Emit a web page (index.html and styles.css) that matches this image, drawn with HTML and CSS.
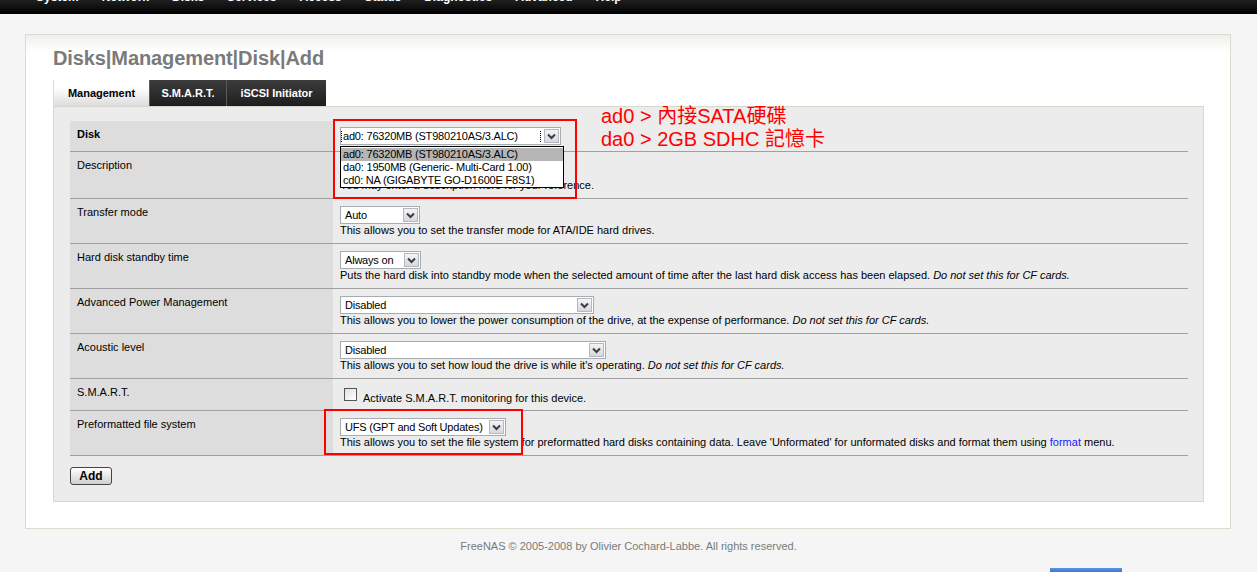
FILE: index.html
```html
<!DOCTYPE html>
<html lang="en">
<head>
  <meta charset="UTF-8" />
  <title>Disks | Management | Disk | Add</title>
  <link rel="stylesheet" href="styles.css">
</head>
<body>

  <!-- Menu superior (solo se ve la parte baja del texto) -->
  <div class="topbar">
    <ul class="menu">
      <li>System</li>
      <li>Network</li>
      <li>Disks</li>
      <li>Services</li>
      <li>Access</li>
      <li>Status</li>
      <li>Diagnostics</li>
      <li>Advanced</li>
      <li>Help</li>
    </ul>
  </div>

  <div class="page">
    <h1 class="title">Disks|Management|Disk|Add</h1>

    <ul class="tabs">
      <li class="active">Management</li>
      <li>S.M.A.R.T.</li>
      <li>iSCSI Initiator</li>
    </ul>

    <div class="tab-content">
      <table class="form">
        <tr>
          <td class="label bold">Disk</td>
          <td class="value first">
            <div class="select-wrap">
              <div class="select w-disk">
                <span class="text"><span class="focus">ad0: 76320MB (ST980210AS/3.ALC)</span></span>
                <span class="arrow"><svg width="9" height="7" viewBox="0 0 9 7"><path d="M1 1.5 L4.5 5 L8 1.5" fill="none" stroke="#3c3c3c" stroke-width="2"/></svg></span>
              </div>
              <!-- lista desplegada -->
              <ul class="dropdown">
                <li class="selected">ad0: 76320MB (ST980210AS/3.ALC)</li>
                <li>da0: 1950MB (Generic- Multi-Card 1.00)</li>
                <li>cd0: NA (GIGABYTE GO-D1600E F8S1)</li>
              </ul>
            </div>
          </td>
        </tr>
        <tr>
          <td class="label">Description</td>
          <td class="value">
            <div class="input"></div>
            <div class="hint">You may enter a description here for your reference.</div>
          </td>
        </tr>
        <tr>
          <td class="label">Transfer mode</td>
          <td class="value">
            <div class="select w-transfer">
              <span class="text">Auto</span>
              <span class="arrow"><svg width="9" height="7" viewBox="0 0 9 7"><path d="M1 1.5 L4.5 5 L8 1.5" fill="none" stroke="#3c3c3c" stroke-width="2"/></svg></span>
            </div>
            <div class="hint">This allows you to set the transfer mode for ATA/IDE hard drives.</div>
          </td>
        </tr>
        <tr>
          <td class="label">Hard disk standby time</td>
          <td class="value">
            <div class="select w-standby">
              <span class="text">Always on</span>
              <span class="arrow"><svg width="9" height="7" viewBox="0 0 9 7"><path d="M1 1.5 L4.5 5 L8 1.5" fill="none" stroke="#3c3c3c" stroke-width="2"/></svg></span>
            </div>
            <div class="hint">Puts the hard disk into standby mode when the selected amount of time after the last hard disk access has been elapsed. <em>Do not set this for CF cards.</em></div>
          </td>
        </tr>
        <tr>
          <td class="label">Advanced Power Management</td>
          <td class="value">
            <div class="select w-apm">
              <span class="text">Disabled</span>
              <span class="arrow"><svg width="9" height="7" viewBox="0 0 9 7"><path d="M1 1.5 L4.5 5 L8 1.5" fill="none" stroke="#3c3c3c" stroke-width="2"/></svg></span>
            </div>
            <div class="hint">This allows you to lower the power consumption of the drive, at the expense of performance. <em>Do not set this for CF cards.</em></div>
          </td>
        </tr>
        <tr>
          <td class="label">Acoustic level</td>
          <td class="value">
            <div class="select w-acoustic">
              <span class="text">Disabled</span>
              <span class="arrow"><svg width="9" height="7" viewBox="0 0 9 7"><path d="M1 1.5 L4.5 5 L8 1.5" fill="none" stroke="#3c3c3c" stroke-width="2"/></svg></span>
            </div>
            <div class="hint">This allows you to set how loud the drive is while it's operating. <em>Do not set this for CF cards.</em></div>
          </td>
        </tr>
        <tr>
          <td class="label">S.M.A.R.T.</td>
          <td class="value smart">
            <div class="check-row">
              <span class="checkbox"></span>
              <span class="check-text">Activate S.M.A.R.T. monitoring for this device.</span>
            </div>
          </td>
        </tr>
        <tr>
          <td class="label">Preformatted file system</td>
          <td class="value">
            <div class="select w-fs">
              <span class="text">UFS (GPT and Soft Updates)</span>
              <span class="arrow"><svg width="9" height="7" viewBox="0 0 9 7"><path d="M1 1.5 L4.5 5 L8 1.5" fill="none" stroke="#3c3c3c" stroke-width="2"/></svg></span>
            </div>
            <div class="hint">This allows you to set the file system for preformatted hard disks containing data. Leave 'Unformated' for unformated disks and format them using <a href="#">format</a> menu.</div>
          </td>
        </tr>
      </table>

      <button class="btn">Add</button>
    </div>
  </div>

  <div class="footer">FreeNAS © 2005-2008 by Olivier Cochard-Labbe. All rights reserved.</div>

  <!-- Anotaciones rojas sobre la captura -->
  <div class="mark mark-disk"></div>
  <div class="mark mark-fs"></div>
  <div class="note">
    <div>ad0 &gt; 內接SATA硬碟</div>
    <div>da0 &gt; 2GB SDHC 記憶卡</div>
  </div>

  <div class="corner-tab"></div>

</body>
</html>
```

FILE: styles.css
```css
html, body {
  height: 100%;
  overflow: hidden;
}

body {
  margin: 0;
  padding: 0;
  background: #f5f5f5;
  font-family: "Liberation Sans", Arial, sans-serif;
  font-size: 11px;
  line-height: 13px;
  color: #000;
  position: relative;
}

/* Barra superior */
.topbar {
  height: 14px;
  overflow: hidden;
  background: linear-gradient(#202020, #000000);
}

.menu {
  list-style: none;
  margin: -11px 0 0 36px;
  padding: 0;
  display: flex;
  gap: 23px;
  font-size: 12px;
  line-height: 16px;
  font-weight: bold;
  color: #fff;
}

/* Panel blanco principal */
.page {
  margin: 20px 26px 0 25px;
  padding: 12px 26px 26px 27px;
  background: #fff linear-gradient(#efefeb, #ffffff 16px) no-repeat;
  border: 1px solid #dcdcd0;
}

.title {
  margin: 0 0 10px 0;
  font-size: 20px;
  line-height: 23px;
  font-weight: bold;
  color: #7a7a7a;
  letter-spacing: -0.1px;
}

/* Pestañas */
.tabs {
  list-style: none;
  margin: 0;
  padding: 0;
  display: flex;
  height: 26px;
}

.tabs li {
  line-height: 26px;
  font-weight: bold;
  font-size: 11px;
  color: #fff;
  background: linear-gradient(#3c3c3c, #1e1e1e);
  border-left: 1px solid #5a5a5a;
  text-align: center;
}

.tabs li:nth-child(2) {
  width: 76px;
}

.tabs li:nth-child(3) {
  width: 99px;
}

.tabs li.active {
  width: 95px;
  color: #000;
  border-left: 1px solid #dcdcd0;
  background: linear-gradient(#ffffff 30%, #dcdcdc);
}

.tab-content {
  background: #ececec;
  border: 1px solid #d8d8cc;
  padding: 14px 15px 16px 16px;
}

/* Tabla del formulario */
.form {
  width: 100%;
  border-collapse: collapse;
}

.form td {
  vertical-align: top;
  border-bottom: 1px solid #a0a0a0;
}

.form .label {
  width: 249px;
  padding: 7px 7px;
  background: #dddddd;
}

.form .label.bold {
  font-weight: bold;
}

.form .value {
  padding: 7px 7px 6px 7px;
}

.form .value.first {
  padding: 6px 7px;
}

.form .value.smart {
  padding: 9px 7px 5px 11px;
}

/* Selects estilo XP */
.select-wrap {
  position: relative;
}

.select {
  display: flex;
  align-items: center;
  height: 18px;
  box-sizing: border-box;
  border: 1px solid #a5acb2;
  background: #fff;
}

.select .text {
  flex: 1;
  padding-left: 4px;
  white-space: nowrap;
  overflow: hidden;
  letter-spacing: -0.2px;
}

.select .text .focus {
  display: inline-block;
  padding: 0 1px;
  outline: 1px dotted #000;
  width: 196px;
}

.w-disk .text {
  padding-left: 1px;
}

.select .arrow {
  width: 15px;
  height: 14px;
  margin-right: 1px;
  box-sizing: border-box;
  border: 1px solid #b5b8c0;
  background: linear-gradient(#f4f4f4, #d6d8de);
  display: flex;
  align-items: center;
  justify-content: center;
}

.w-disk { width: 221px; }
.w-transfer { width: 80px; }
.w-standby { width: 81px; }
.w-apm { width: 254px; }
.w-acoustic { width: 266px; }
.w-fs { width: 166px; }

.dropdown {
  position: absolute;
  top: 19px;
  left: 0;
  width: 224px;
  margin: 0;
  padding: 1px 0;
  list-style: none;
  background: #fff;
  border: 1px solid #000;
  box-sizing: border-box;
  height: 42px;
  z-index: 5;
  letter-spacing: -0.2px;
}

.dropdown li {
  padding-left: 2px;
  height: 13px;
  line-height: 13px;
  white-space: nowrap;
}

.dropdown li.selected {
  background: #b5b5b5;
}

.input {
  width: 200px;
  height: 20px;
  box-sizing: border-box;
  border: 1px solid #a5acb2;
  background: #fff;
}

.hint {
  white-space: nowrap;
}

.hint a {
  color: #1a1aff;
  text-decoration: none;
}

.check-row {
  display: flex;
  align-items: flex-start;
}

.checkbox {
  width: 13px;
  height: 13px;
  box-sizing: border-box;
  border: 1px solid #555;
  background: linear-gradient(135deg, #e0e0e0, #ffffff);
}

.check-text {
  margin: 4px 0 0 6px;
}

.btn {
  margin-top: 11px;
  display: block;
  width: 42px;
  height: 18px;
  padding: 0;
  font-family: "Liberation Sans", Arial, sans-serif;
  font-size: 12px;
  font-weight: bold;
  color: #000;
  border: 1px solid #444;
  border-radius: 3px;
  background: linear-gradient(#ffffff, #d0d0d0);
}

.footer {
  margin-top: 11px;
  text-align: center;
  color: #7a7a7a;
  font-size: 11px;
}

/* Marcas rojas */
.mark {
  position: absolute;
  border: 2px solid #ff0000;
  box-sizing: border-box;
  z-index: 10;
}

.mark-disk {
  left: 333px;
  top: 119px;
  width: 244px;
  height: 80px;
}

.mark-fs {
  left: 324px;
  top: 409px;
  width: 199px;
  height: 46px;
}

.note {
  position: absolute;
  left: 601px;
  top: 105px;
  color: #ff0000;
  font-size: 20px;
  line-height: 23px;
  font-family: "Liberation Sans", "Noto Sans CJK TC", sans-serif;
  z-index: 10;
}

.corner-tab {
  position: absolute;
  left: 1050px;
  top: 568px;
  width: 72px;
  height: 4px;
  background: linear-gradient(#5b95e6, #3a78d2);
}
```
